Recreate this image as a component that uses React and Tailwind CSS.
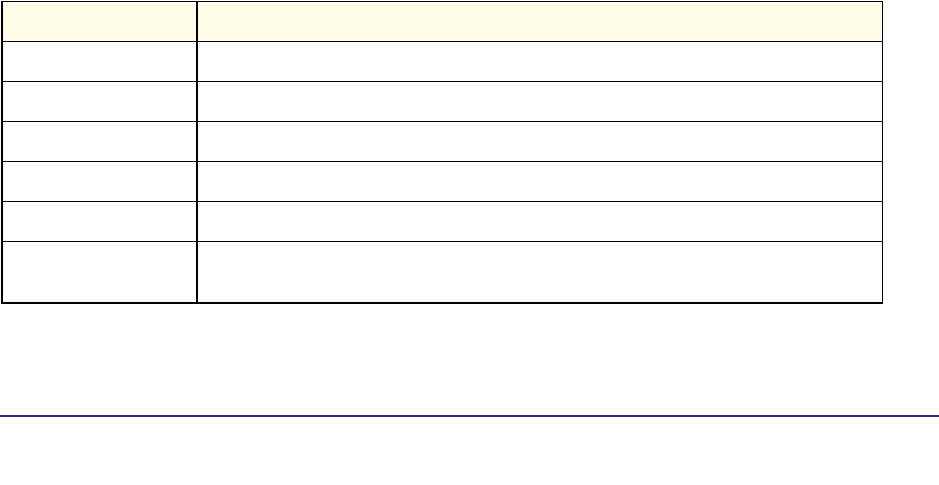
import React from 'react'

const rows = [
  { h: 'h-[40px]' },
  { h: 'h-[40px]' },
  { h: 'h-[40px]' },
  { h: 'h-[40px]' },
  { h: 'h-[40px]' },
  { h: 'h-[60px]' },
]

export default function App(){
  return (
    <div className="w-[939px] h-[485px] bg-white overflow-hidden" style={{ fontFamily: '"Liberation Sans", Arial, sans-serif' }}>
      {/* Table */}
      <div className="ml-px mt-px w-[882px] border-t border-r border-l-2 border-b-2 border-black">
        <div className="grid grid-cols-[195px_1fr] h-[40px] border-b border-black bg-[#fffde8]">
          <div className="border-r-2 border-black"></div>
          <div></div>
        </div>
        {rows.map((r, i) => (
          <div
            key={i}
            className={`grid grid-cols-[195px_1fr] ${r.h} ${i < rows.length - 1 ? 'border-b border-black' : ''}`}
          >
            <div className="border-r-2 border-black"></div>
            <div></div>
          </div>
        ))}
      </div>

      {/* Footer rule */}
      <div className="mt-[111px] h-[2px] w-full bg-[#2e2e78]"></div>
    </div>
  )
}
